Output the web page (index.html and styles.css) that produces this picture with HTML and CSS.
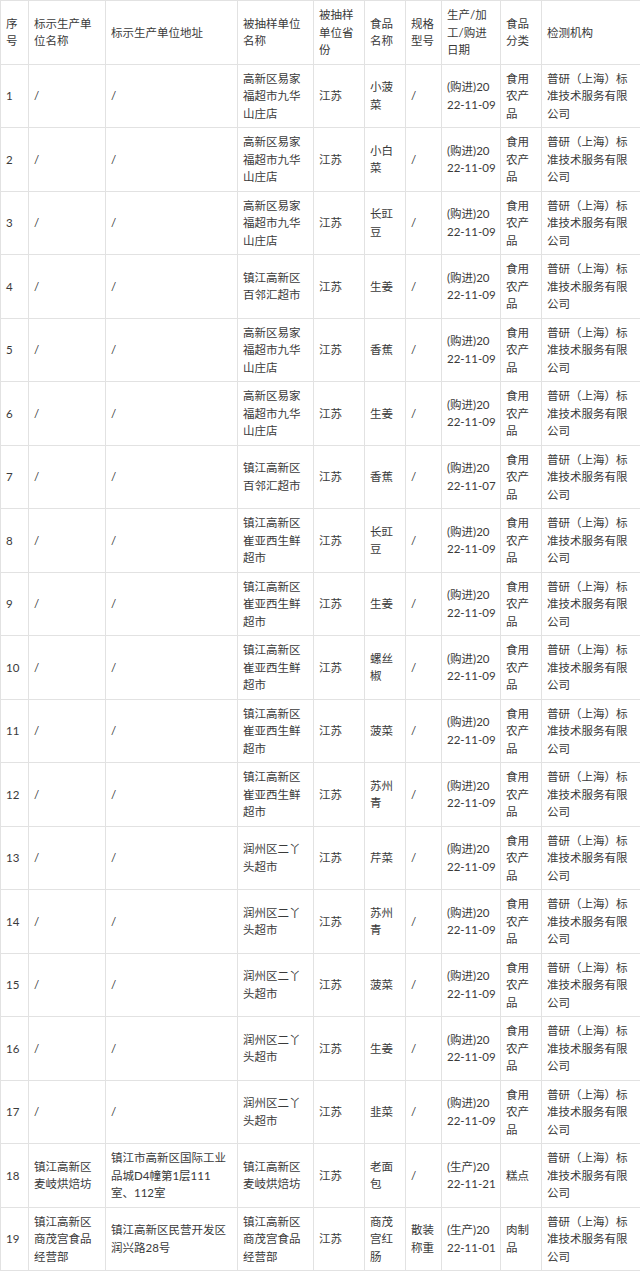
FILE: index.html
```html
<!DOCTYPE html>
<html lang="zh-CN">
<head>
<meta charset="utf-8">
<title>抽检结果</title>
<link rel="stylesheet" href="styles.css">
</head>
<body>
<table class="sheet">
<colgroup>
<col class="c1"><col class="c2"><col class="c3"><col class="c4"><col class="c5"><col class="c6"><col class="c7"><col class="c8"><col class="c9"><col class="c10">
</colgroup>
<thead>
<tr><td>序号</td><td>标示生产单位名称</td><td>标示生产单位地址</td><td>被抽样单位名称</td><td>被抽样单位省份</td><td>食品名称</td><td>规格型号</td><td>生产/加工/购进日期</td><td>食品分类</td><td>检测机构</td></tr>
</thead>
<tbody>
<tr><td>1</td><td>/</td><td>/</td><td>高新区易家福超市九华山庄店</td><td>江苏</td><td>小菠菜</td><td>/</td><td class="date">(购进)2022-11-09</td><td>食用农产品</td><td>普研（上海）标准技术服务有限公司</td></tr>
<tr><td>2</td><td>/</td><td>/</td><td>高新区易家福超市九华山庄店</td><td>江苏</td><td>小白菜</td><td>/</td><td class="date">(购进)2022-11-09</td><td>食用农产品</td><td>普研（上海）标准技术服务有限公司</td></tr>
<tr><td>3</td><td>/</td><td>/</td><td>高新区易家福超市九华山庄店</td><td>江苏</td><td>长豇豆</td><td>/</td><td class="date">(购进)2022-11-09</td><td>食用农产品</td><td>普研（上海）标准技术服务有限公司</td></tr>
<tr><td>4</td><td>/</td><td>/</td><td>镇江高新区百邻汇超市</td><td>江苏</td><td>生姜</td><td>/</td><td class="date">(购进)2022-11-09</td><td>食用农产品</td><td>普研（上海）标准技术服务有限公司</td></tr>
<tr><td>5</td><td>/</td><td>/</td><td>高新区易家福超市九华山庄店</td><td>江苏</td><td>香蕉</td><td>/</td><td class="date">(购进)2022-11-09</td><td>食用农产品</td><td>普研（上海）标准技术服务有限公司</td></tr>
<tr><td>6</td><td>/</td><td>/</td><td>高新区易家福超市九华山庄店</td><td>江苏</td><td>生姜</td><td>/</td><td class="date">(购进)2022-11-09</td><td>食用农产品</td><td>普研（上海）标准技术服务有限公司</td></tr>
<tr><td>7</td><td>/</td><td>/</td><td>镇江高新区百邻汇超市</td><td>江苏</td><td>香蕉</td><td>/</td><td class="date">(购进)2022-11-07</td><td>食用农产品</td><td>普研（上海）标准技术服务有限公司</td></tr>
<tr><td>8</td><td>/</td><td>/</td><td>镇江高新区崔亚西生鲜超市</td><td>江苏</td><td>长豇豆</td><td>/</td><td class="date">(购进)2022-11-09</td><td>食用农产品</td><td>普研（上海）标准技术服务有限公司</td></tr>
<tr><td>9</td><td>/</td><td>/</td><td>镇江高新区崔亚西生鲜超市</td><td>江苏</td><td>生姜</td><td>/</td><td class="date">(购进)2022-11-09</td><td>食用农产品</td><td>普研（上海）标准技术服务有限公司</td></tr>
<tr><td>10</td><td>/</td><td>/</td><td>镇江高新区崔亚西生鲜超市</td><td>江苏</td><td>螺丝椒</td><td>/</td><td class="date">(购进)2022-11-09</td><td>食用农产品</td><td>普研（上海）标准技术服务有限公司</td></tr>
<tr><td>11</td><td>/</td><td>/</td><td>镇江高新区崔亚西生鲜超市</td><td>江苏</td><td>菠菜</td><td>/</td><td class="date">(购进)2022-11-09</td><td>食用农产品</td><td>普研（上海）标准技术服务有限公司</td></tr>
<tr><td>12</td><td>/</td><td>/</td><td>镇江高新区崔亚西生鲜超市</td><td>江苏</td><td>苏州青</td><td>/</td><td class="date">(购进)2022-11-09</td><td>食用农产品</td><td>普研（上海）标准技术服务有限公司</td></tr>
<tr><td>13</td><td>/</td><td>/</td><td>润州区二丫头超市</td><td>江苏</td><td>芹菜</td><td>/</td><td class="date">(购进)2022-11-09</td><td>食用农产品</td><td>普研（上海）标准技术服务有限公司</td></tr>
<tr><td>14</td><td>/</td><td>/</td><td>润州区二丫头超市</td><td>江苏</td><td>苏州青</td><td>/</td><td class="date">(购进)2022-11-09</td><td>食用农产品</td><td>普研（上海）标准技术服务有限公司</td></tr>
<tr><td>15</td><td>/</td><td>/</td><td>润州区二丫头超市</td><td>江苏</td><td>菠菜</td><td>/</td><td class="date">(购进)2022-11-09</td><td>食用农产品</td><td>普研（上海）标准技术服务有限公司</td></tr>
<tr><td>16</td><td>/</td><td>/</td><td>润州区二丫头超市</td><td>江苏</td><td>生姜</td><td>/</td><td class="date">(购进)2022-11-09</td><td>食用农产品</td><td>普研（上海）标准技术服务有限公司</td></tr>
<tr><td>17</td><td>/</td><td>/</td><td>润州区二丫头超市</td><td>江苏</td><td>韭菜</td><td>/</td><td class="date">(购进)2022-11-09</td><td>食用农产品</td><td>普研（上海）标准技术服务有限公司</td></tr>
<tr><td>18</td><td>镇江高新区麦岐烘焙坊</td><td>镇江市高新区国际工业品城D4幢第1层111室、112室</td><td>镇江高新区麦岐烘焙坊</td><td>江苏</td><td>老面包</td><td>/</td><td class="date">(生产)2022-11-21</td><td>糕点</td><td>普研（上海）标准技术服务有限公司</td></tr>
<tr><td>19</td><td>镇江高新区商茂宫食品经营部</td><td>镇江高新区民营开发区润兴路28号</td><td>镇江高新区商茂宫食品经营部</td><td>江苏</td><td>商茂宫红肠</td><td>散装称重</td><td class="date">(生产)2022-11-01</td><td>肉制品</td><td>普研（上海）标准技术服务有限公司</td></tr>
</tbody>
</table>
</body>
</html>
```

FILE: styles.css
```css
html, body {
  margin: 0;
  padding: 0;
  background: #ffffff;
}

.sheet {
  width: 640px;
  table-layout: fixed;
  border-collapse: collapse;
  font-family: "Lato", "Noto Sans CJK SC", sans-serif;
  font-size: 11.5px;
  line-height: 17.5px;
  color: #3a3a3a;
}

.c1 { width: 28px; }
.c2 { width: 77px; }
.c3 { width: 132px; }
.c4 { width: 76px; }
.c5 { width: 51px; }
.c6 { width: 41px; }
.c7 { width: 36px; }
.c8 { width: 59px; }
.c9 { width: 41px; }
.c10 { width: 99px; }

.sheet td {
  border: 1px solid #e2e2e2;
  padding: 5px 4px 5px 5px;
  vertical-align: middle;
  text-align: left;
}

.sheet td:nth-child(3) {
  padding-right: 9px;
}

.sheet td.date {
  word-break: break-all;
}
```
